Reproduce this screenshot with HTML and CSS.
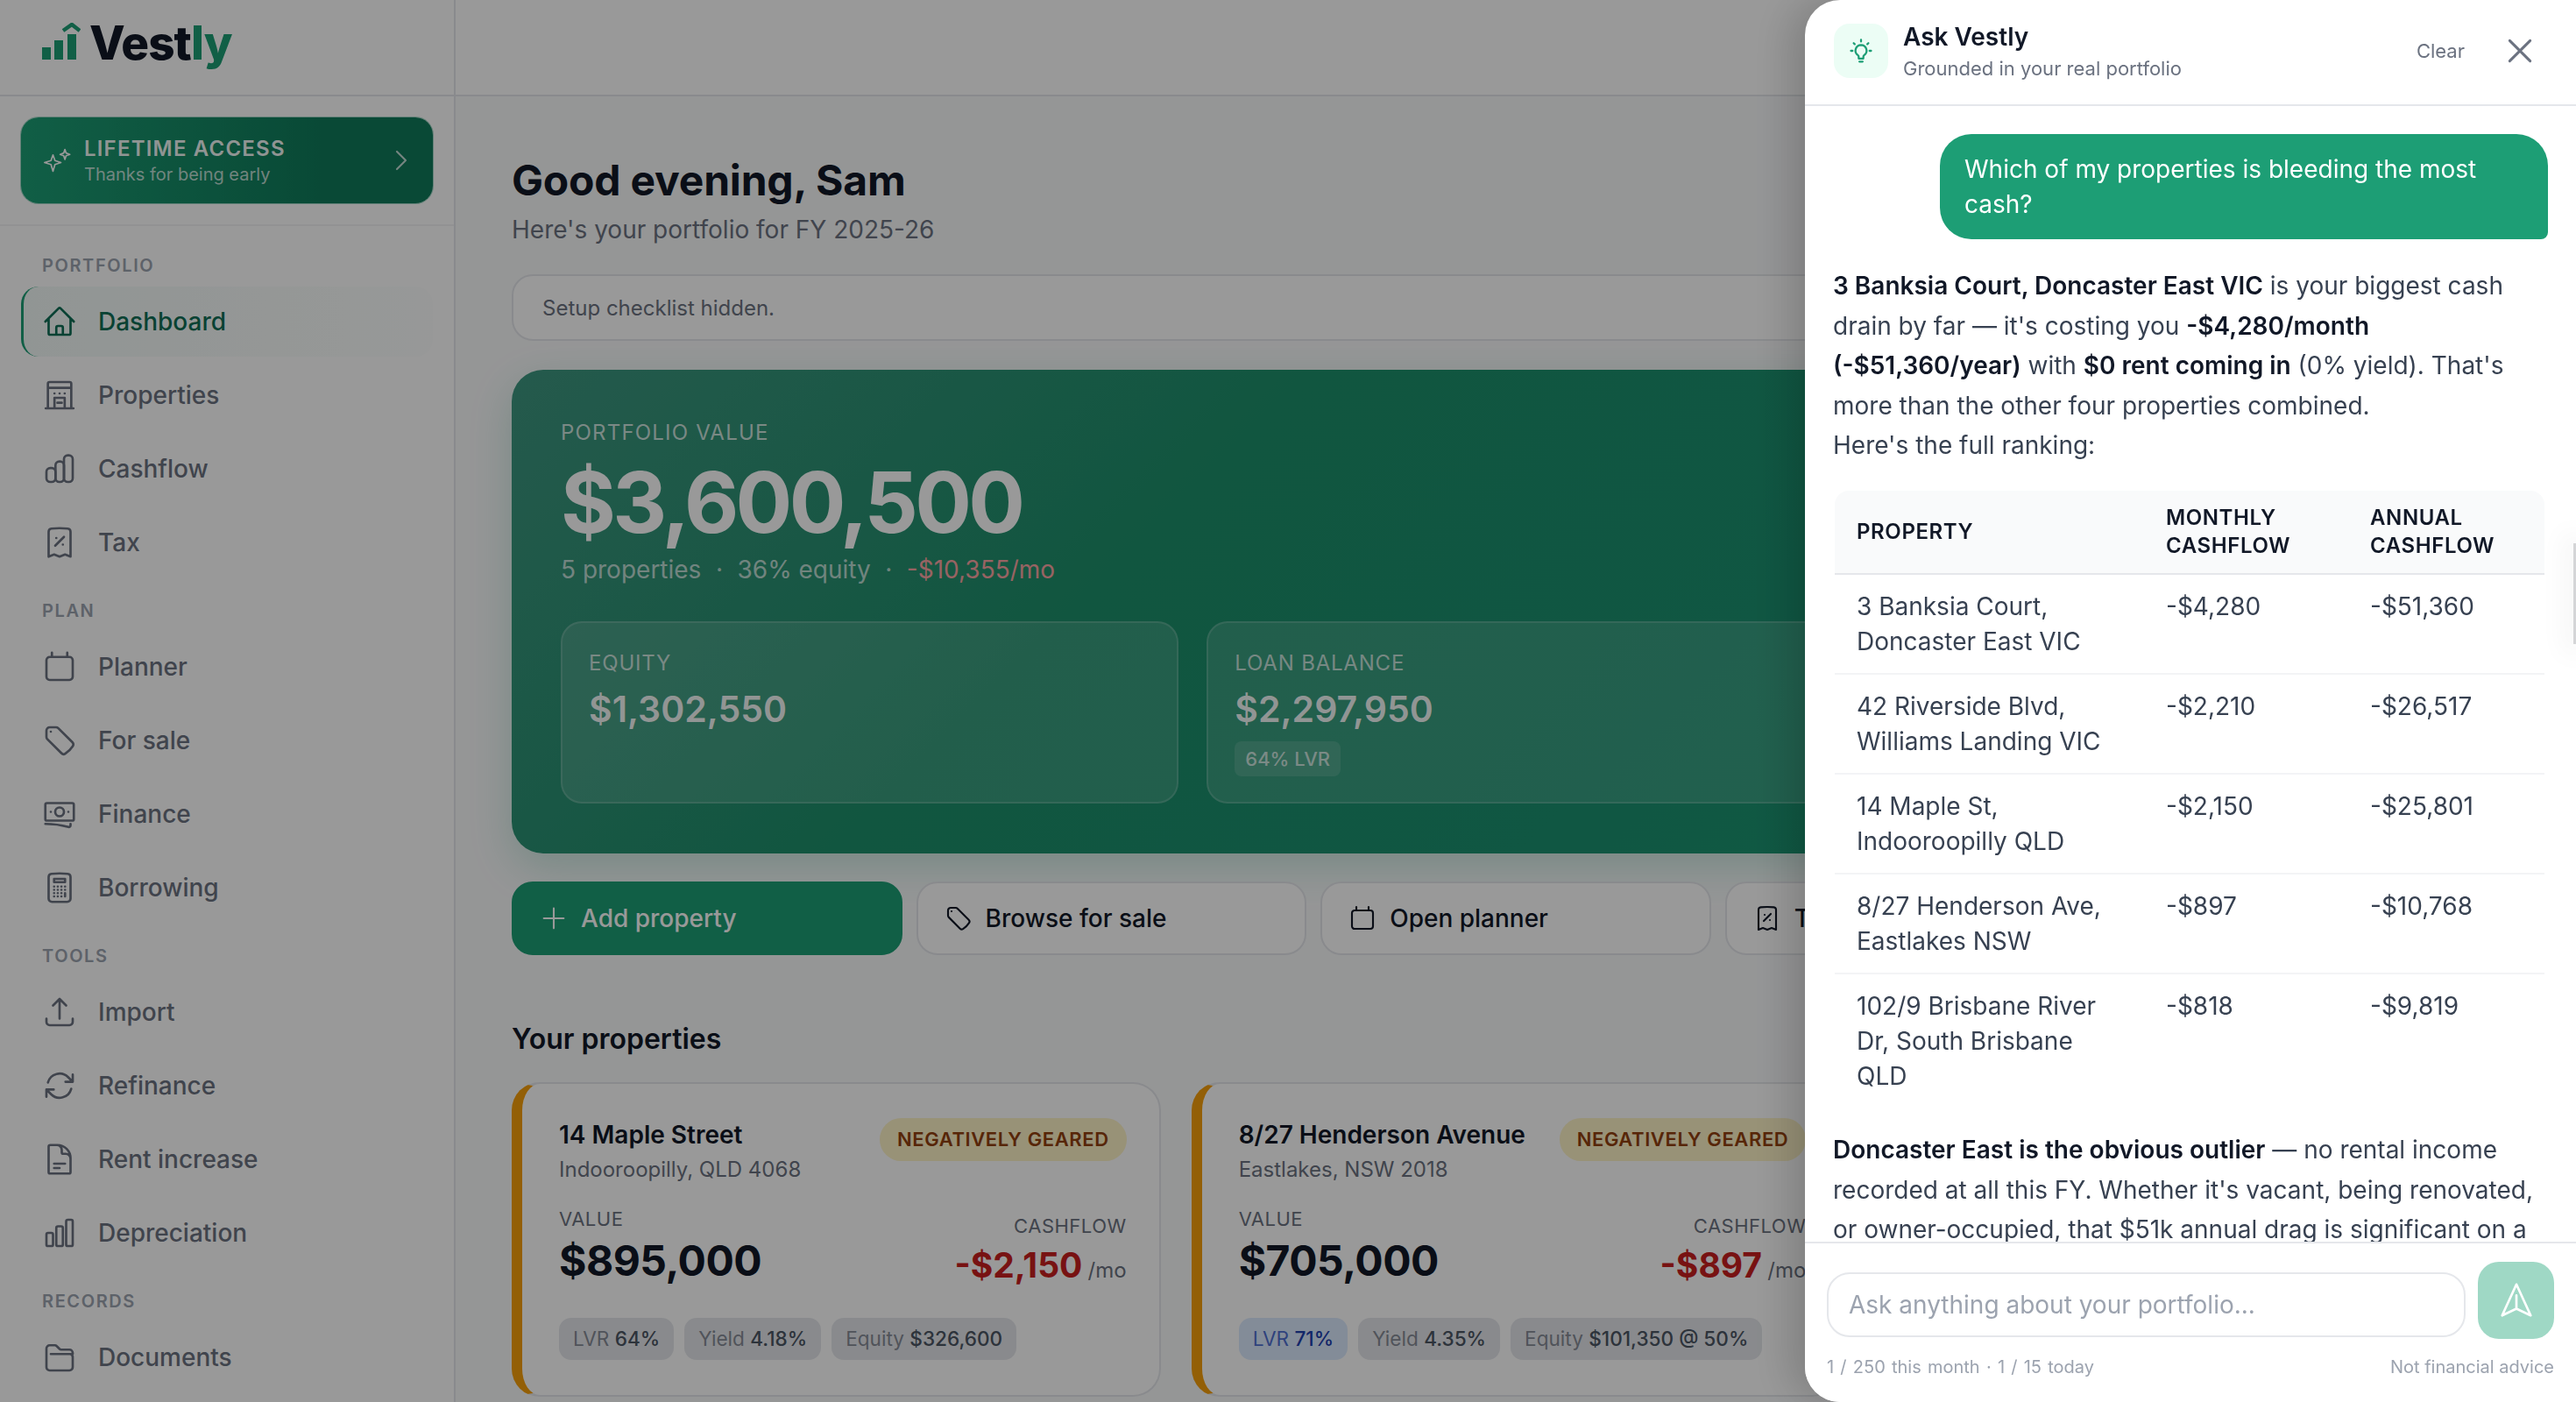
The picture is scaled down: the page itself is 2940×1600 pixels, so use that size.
FILE: index.html
```html
<!DOCTYPE html>
<html lang="en">
<head>
    <meta charset="UTF-8">
    <meta name="viewport" content="width=device-width, initial-scale=1.0">
    <title>Vestly</title>
    <link rel="stylesheet" href="styles.css">
</head>
<body>
    <!-- icon sprite -->
    <svg class="sprite" xmlns="http://www.w3.org/2000/svg">
        <symbol id="i-home" viewBox="0 0 24 24"><path d="m2.25 12 8.954-8.955c.44-.439 1.152-.439 1.591 0L21.75 12M4.5 9.75v10.125c0 .621.504 1.125 1.125 1.125H9.75v-4.875c0-.621.504-1.125 1.125-1.125h2.25c.621 0 1.125.504 1.125 1.125V21h4.125c.621 0 1.125-.504 1.125-1.125V9.75M8.25 21h8.25"/></symbol>
        <symbol id="i-building" viewBox="0 0 24 24"><path d="M2.5 21h19M4 21V4.1C4 3.5 4.5 3 5.1 3h13.8c.6 0 1.1.5 1.1 1.1V21M4 7h16M8.5 10.8h.01M12 10.8h.01M15.5 10.8h.01M8.5 21v-7.2h7V21M10.5 17.2h3"/></symbol>
        <symbol id="i-bars-joined" viewBox="0 0 24 24"><rect x="3" y="11.5" width="6.2" height="9.5" rx="2.6"/><rect x="9.2" y="7" width="5.8" height="14" rx="2.6"/><rect x="15" y="2.75" width="6" height="18.25" rx="2.6"/></symbol>
        <symbol id="i-receipt" viewBox="0 0 24 24"><path d="m9 14.25 6-6m4.5-3.493V21.75l-3.75-1.5-3.75 1.5-3.75-1.5-3.75 1.5V4.757c0-1.108.806-2.057 1.907-2.185a48.507 48.507 0 0 1 11.186 0c1.1.128 1.907 1.077 1.907 2.185ZM9.75 9h.008v.008H9.75V9Zm4.5 4.5h.008v.008h-.008V13.5Z"/></symbol>
        <symbol id="i-calendar" viewBox="0 0 24 24"><path d="M6.75 2.25v3M17.25 2.25v3M3 18.75V7.5a2.25 2.25 0 0 1 2.25-2.25h13.5A2.25 2.25 0 0 1 21 7.5v11.25A2.25 2.25 0 0 1 18.75 21H5.25A2.25 2.25 0 0 1 3 18.75Z"/></symbol>
        <symbol id="i-tag" viewBox="0 0 24 24"><path d="M9.568 3H5.25A2.25 2.25 0 0 0 3 5.25v4.318c0 .597.237 1.17.659 1.591l9.581 9.581c.699.699 1.78.872 2.607.33a18.095 18.095 0 0 0 5.223-5.223c.542-.827.369-1.908-.33-2.607L11.16 3.66A2.25 2.25 0 0 0 9.568 3Z"/><path d="M6 6h.008v.008H6V6Z"/></symbol>
        <symbol id="i-banknotes" viewBox="0 0 24 24"><path d="M2.25 18.75a60.07 60.07 0 0 1 15.797 2.101c.727.198 1.453-.342 1.453-1.096V18.75M3.375 4.5h17.25c.621 0 1.125.504 1.125 1.125v9.75c0 .621-.504 1.125-1.125 1.125H3.375a1.125 1.125 0 0 1-1.125-1.125v-9.75c0-.621.504-1.125 1.125-1.125ZM15 10.5a3 3 0 1 1-6 0 3 3 0 0 1 6 0Zm3 0h.008v.008H18V10.5Zm-12 0h.008v.008H6V10.5Z"/></symbol>
        <symbol id="i-calculator" viewBox="0 0 24 24"><path d="M15.75 15.75V18m-7.5-6.75h.008v.008H8.25v-.008Zm0 2.25h.008v.008H8.25V13.5Zm0 2.25h.008v.008H8.25v-.008Zm0 2.25h.008v.008H8.25V18Zm2.498-6.75h.007v.008h-.007v-.008Zm0 2.25h.007v.008h-.007V13.5Zm0 2.25h.007v.008h-.007v-.008Zm0 2.25h.007v.008h-.007V18Zm2.504-6.75h.008v.008h-.008v-.008Zm0 2.25h.008v.008h-.008V13.5Zm0 2.25h.008v.008h-.008v-.008Zm0 2.25h.008v.008h-.008V18Zm2.498-6.75h.008v.008h-.008v-.008Zm0 2.25h.008v.008h-.008V13.5ZM8.25 6h7.5v2.25h-7.5V6ZM12 2.25c-1.892 0-3.758.11-5.593.322C5.307 2.7 4.5 3.65 4.5 4.757V19.5a2.25 2.25 0 0 0 2.25 2.25h10.5a2.25 2.25 0 0 0 2.25-2.25V4.757c0-1.108-.806-2.057-1.907-2.185A48.507 48.507 0 0 0 12 2.25Z"/></symbol>
        <symbol id="i-upload" viewBox="0 0 24 24"><path d="M3 16.5v2.25A2.25 2.25 0 0 0 5.25 21h13.5A2.25 2.25 0 0 0 21 18.75V16.5m-13.5-9L12 3m0 0 4.5 4.5M12 3v13.5"/></symbol>
        <symbol id="i-refresh" viewBox="0 0 24 24"><path d="M16.023 9.348h4.992v-.001M2.985 19.644v-4.992m0 0h4.992m-4.993 0 3.181 3.183a8.25 8.25 0 0 0 13.803-3.7M4.031 9.865a8.25 8.25 0 0 1 13.803-3.7l3.181 3.182m0-4.991v4.99"/></symbol>
        <symbol id="i-document" viewBox="0 0 24 24"><path d="M19.5 14.25v-2.625a3.375 3.375 0 0 0-3.375-3.375h-1.5A1.125 1.125 0 0 1 13.5 7.125v-1.5a3.375 3.375 0 0 0-3.375-3.375H8.25m0 12.75h7.5m-7.5 3H12M10.5 2.25H5.625c-.621 0-1.125.504-1.125 1.125v17.25c0 .621.504 1.125 1.125 1.125h12.75c.621 0 1.125-.504 1.125-1.125V11.25a9 9 0 0 0-9-9Z"/></symbol>
        <symbol id="i-bars" viewBox="0 0 24 24"><path d="M3 13.125C3 12.504 3.504 12 4.125 12h2.25c.621 0 1.125.504 1.125 1.125v6.75C7.5 20.496 6.996 21 6.375 21h-2.25A1.125 1.125 0 0 1 3 19.875v-6.75ZM9.75 8.625c0-.621.504-1.125 1.125-1.125h2.25c.621 0 1.125.504 1.125 1.125v11.25c0 .621-.504 1.125-1.125 1.125h-2.25a1.125 1.125 0 0 1-1.125-1.125V8.625ZM16.5 4.125c0-.621.504-1.125 1.125-1.125h2.25C20.496 3 21 3.504 21 4.125v15.75c0 .621-.504 1.125-1.125 1.125h-2.25a1.125 1.125 0 0 1-1.125-1.125V4.125Z"/></symbol>
        <symbol id="i-folder" viewBox="0 0 24 24"><path d="M3 17.5V6a2.25 2.25 0 0 1 2.25-2.25h3.6c.4 0 .8.16 1.06.44l2.1 2.12c.28.28.66.44 1.06.44h5.68A2.25 2.25 0 0 1 21 9v.75M6 9.75h13.5A2.25 2.25 0 0 1 21 12v6.75A2.25 2.25 0 0 1 18.75 21H5.25A2.25 2.25 0 0 1 3 18.75V12"/></symbol>
        <symbol id="i-sparkles" viewBox="0 0 30 26"><path d="M11 7.5 13 13.2 19 15.2 13 17.2 11 24 9 17.2 2.5 15.2 9 13.2ZM23 2l1.2 3.6L28 7 24.2 8.4 23 12 21.8 8.4 18.2 7 21.8 5.6Z"/></symbol>
        <symbol id="i-chevron" viewBox="0 0 24 24"><path d="m8.25 4.5 7.5 7.5-7.5 7.5"/></symbol>
        <symbol id="i-plus" viewBox="0 0 24 24"><path d="M12 3.5v17m8.5-8.5h-17"/></symbol>
        <symbol id="i-close" viewBox="0 0 24 24"><path d="M5 5l14 14M19 5 5 19"/></symbol>
        <symbol id="i-bulb" viewBox="0 0 24 24"><path d="M12 7a4.8 4.8 0 0 0-2.6 8.8c.4.3.6.7.6 1.2v1.6h4V17c0-.5.2-.9.6-1.2A4.8 4.8 0 0 0 12 7ZM10.6 21.2h2.8M12 2.5v1.6M4.7 12H3.4M20.6 12h-1.3M6.6 6.3l-.9-.9M17.4 6.3l.9-.9"/></symbol>
        <symbol id="i-send" viewBox="0 0 24 24"><path d="M12 2.5 20.5 21 12 17 3.5 21 12 2.5ZM12 17V9"/></symbol>
    </svg>

    <div class="app">
        <aside class="sidebar">
            <div class="brand">
                <svg class="brand-mark" viewBox="0 0 44 44">
                    <rect x="0" y="28" width="10" height="14"/>
                    <rect x="14" y="20" width="10" height="22"/>
                    <rect x="29" y="13" width="10" height="29"/>
                    <path class="brand-arrow" d="M24 9 34 2 43 9"/>
                </svg>
                <span class="brand-name">Vest<span>ly</span></span>
            </div>
            <div class="lifetime-wrap">
                <div class="lifetime">
                    <svg class="icon lifetime-star"><use href="#i-sparkles"/></svg>
                    <div class="lifetime-text">
                        <div class="lifetime-title">LIFETIME ACCESS</div>
                        <div class="lifetime-sub">Thanks for being early</div>
                    </div>
                    <svg class="icon lifetime-arrow"><use href="#i-chevron"/></svg>
                </div>
            </div>
            <nav class="nav">
                <div class="nav-label">PORTFOLIO</div>
                <a class="nav-item active"><svg class="icon"><use href="#i-home"/></svg>Dashboard</a>
                <a class="nav-item"><svg class="icon"><use href="#i-building"/></svg>Properties</a>
                <a class="nav-item"><svg class="icon"><use href="#i-bars-joined"/></svg>Cashflow</a>
                <a class="nav-item"><svg class="icon"><use href="#i-receipt"/></svg>Tax</a>

                <div class="nav-label">PLAN</div>
                <a class="nav-item"><svg class="icon"><use href="#i-calendar"/></svg>Planner</a>
                <a class="nav-item"><svg class="icon"><use href="#i-tag"/></svg>For sale</a>
                <a class="nav-item"><svg class="icon"><use href="#i-banknotes"/></svg>Finance</a>
                <a class="nav-item"><svg class="icon"><use href="#i-calculator"/></svg>Borrowing</a>

                <div class="nav-label">TOOLS</div>
                <a class="nav-item"><svg class="icon"><use href="#i-upload"/></svg>Import</a>
                <a class="nav-item"><svg class="icon"><use href="#i-refresh"/></svg>Refinance</a>
                <a class="nav-item"><svg class="icon"><use href="#i-document"/></svg>Rent increase</a>
                <a class="nav-item"><svg class="icon"><use href="#i-bars"/></svg>Depreciation</a>

                <div class="nav-label">RECORDS</div>
                <a class="nav-item"><svg class="icon"><use href="#i-folder"/></svg>Documents</a>
            </nav>
        </aside>

        <main class="main">
            <div class="topbar"></div>
            <div class="content">
                <h1 class="greeting">Good evening, Sam</h1>
                <p class="greeting-sub">Here's your portfolio for FY 2025-26</p>
                <div class="setup-note">Setup checklist hidden.</div>

                <section class="hero">
                    <div class="hero-label">PORTFOLIO VALUE</div>
                    <div class="hero-value">$3,600,500</div>
                    <div class="hero-meta">5 properties<i>·</i>36% equity<i>·</i><span>-$10,355/mo</span></div>
                    <div class="hero-stats">
                        <div class="stat">
                            <div class="stat-label">EQUITY</div>
                            <div class="stat-value">$1,302,550</div>
                        </div>
                        <div class="stat">
                            <div class="stat-label">LOAN BALANCE</div>
                            <div class="stat-value">$2,297,950</div>
                            <span class="stat-chip">64% LVR</span>
                        </div>
                        <div class="stat">
                            <div class="stat-label">CASHFLOW</div>
                            <div class="stat-value">-$10,355</div>
                        </div>
                    </div>
                </section>

                <div class="actions">
                    <button class="action primary"><svg class="icon"><use href="#i-plus"/></svg>Add property</button>
                    <button class="action"><svg class="icon"><use href="#i-tag"/></svg>Browse for sale</button>
                    <button class="action"><svg class="icon"><use href="#i-calendar"/></svg>Open planner</button>
                    <button class="action"><svg class="icon"><use href="#i-receipt"/></svg>Tax summary</button>
                    <button class="action"><svg class="icon"><use href="#i-document"/></svg>Reports</button>
                </div>

                <h2 class="section-title">Your properties</h2>
                <div class="cards">
                    <article class="card">
                        <div class="card-head">
                            <div>
                                <div class="card-title">14 Maple Street</div>
                                <div class="card-sub">Indooroopilly, QLD 4068</div>
                            </div>
                            <span class="badge">NEGATIVELY GEARED</span>
                        </div>
                        <div class="card-figures">
                            <div>
                                <div class="figure-label">VALUE</div>
                                <div class="figure-value">$895,000</div>
                            </div>
                            <div class="figure-right">
                                <div class="figure-label">CASHFLOW</div>
                                <div class="figure-cash">-$2,150 <span>/mo</span></div>
                            </div>
                        </div>
                        <div class="chips">
                            <span class="chip">LVR <b>64%</b></span>
                            <span class="chip">Yield <b>4.18%</b></span>
                            <span class="chip">Equity <b>$326,600</b></span>
                        </div>
                    </article>
                    <article class="card">
                        <div class="card-head">
                            <div>
                                <div class="card-title">8/27 Henderson Avenue</div>
                                <div class="card-sub">Eastlakes, NSW 2018</div>
                            </div>
                            <span class="badge">NEGATIVELY GEARED</span>
                        </div>
                        <div class="card-figures">
                            <div>
                                <div class="figure-label">VALUE</div>
                                <div class="figure-value">$705,000</div>
                            </div>
                            <div class="figure-right">
                                <div class="figure-label">CASHFLOW</div>
                                <div class="figure-cash">-$897 <span>/mo</span></div>
                            </div>
                        </div>
                        <div class="chips">
                            <span class="chip blue">LVR <b>71%</b></span>
                            <span class="chip">Yield <b>4.35%</b></span>
                            <span class="chip">Equity <b>$101,350 @ 50%</b></span>
                        </div>
                    </article>
                </div>
            </div>
        </main>
    </div>

    <div class="backdrop"></div>

    <aside class="chat">
        <header class="chat-head">
            <div class="chat-logo"><svg class="icon"><use href="#i-bulb"/></svg></div>
            <div class="chat-heading">
                <div class="chat-title">Ask Vestly</div>
                <div class="chat-sub">Grounded in your real portfolio</div>
            </div>
            <button class="chat-clear">Clear</button>
            <svg class="icon chat-close"><use href="#i-close"/></svg>
        </header>

        <div class="chat-body">
            <div class="bubble">Which of my properties is bleeding the most cash?</div>
            <p class="answer"><strong>3 Banksia Court, Doncaster East VIC</strong> is your biggest cash drain by far — it's costing you <strong>-$4,280/month (-$51,360/year)</strong> with <strong>$0 rent coming in</strong> (0% yield). That's more than the other four properties combined.<br>Here's the full ranking:</p>
            <table class="rank">
                <thead>
                    <tr><th>PROPERTY</th><th>MONTHLY CASHFLOW</th><th>ANNUAL CASHFLOW</th></tr>
                </thead>
                <tbody>
                    <tr><td>3 Banksia Court, Doncaster East VIC</td><td>-$4,280</td><td>-$51,360</td></tr>
                    <tr><td>42 Riverside Blvd, Williams Landing VIC</td><td>-$2,210</td><td>-$26,517</td></tr>
                    <tr><td>14 Maple St, Indooroopilly QLD</td><td>-$2,150</td><td>-$25,801</td></tr>
                    <tr><td>8/27 Henderson Ave, Eastlakes NSW</td><td>-$897</td><td>-$10,768</td></tr>
                    <tr><td>102/9 Brisbane River Dr, South Brisbane QLD</td><td>-$818</td><td>-$9,819</td></tr>
                </tbody>
            </table>
            <p class="answer"><strong>Doncaster East is the obvious outlier</strong> — no rental income recorded at all this FY. Whether it's vacant, being renovated, or owner-occupied, that $51k annual drag is significant on a</p>
        </div>
        <div class="chat-thumb"></div>

        <footer class="chat-foot">
            <div class="composer">
                <input class="composer-input" type="text" placeholder="Ask anything about your portfolio...">
                <button class="composer-send"><svg class="icon"><use href="#i-send"/></svg></button>
            </div>
            <div class="composer-note">
                <span class="composer-usage">1 / 250 this month · 1 / 15 today</span>
                <span>Not financial advice</span>
            </div>
        </footer>
    </aside>
</body>
</html>
```

FILE: styles.css
```css
* {
    margin: 0;
    padding: 0;
    box-sizing: border-box;
}

html, body {
    height: 100%;
    overflow: hidden;
}

body {
    font-family: 'Inter', 'Liberation Sans', sans-serif;
    background: #f9fafb;
    color: #111827;
}

.sprite {
    display: none;
}

.icon {
    width: 40px;
    height: 40px;
    flex: none;
    fill: none;
    stroke: currentColor;
    stroke-width: 1.6;
    stroke-linecap: round;
    stroke-linejoin: round;
}

.app {
    display: flex;
    height: 100vh;
}

/* Sidebar */
.sidebar {
    width: 520px;
    flex: none;
    background: #fff;
    border-right: 2px solid #e5e7eb;
    overflow: hidden;
}

.brand {
    height: 110px;
    padding: 0 48px 10px;
    display: flex;
    align-items: center;
    gap: 10px;
    border-bottom: 2px solid #e5e7eb;
}

.brand-mark {
    width: 44px;
    height: 44px;
    margin-top: -3px;
    fill: #1d9e75;
}

.brand-arrow {
    fill: none;
    stroke: #1d9e75;
    stroke-width: 4.5;
}

.brand-name {
    font-size: 53px;
    font-weight: 800;
    letter-spacing: -1px;
    color: #111827;
    line-height: 1;
}

.brand-name span {
    color: #1d9e75;
}

.lifetime-wrap {
    padding: 24px;
    border-bottom: 2px solid #f3f4f6;
}

.lifetime {
    height: 98px;
    padding: 0 20px 0 24px;
    display: flex;
    align-items: center;
    gap: 14px;
    border-radius: 20px;
    color: #fff;
    background: linear-gradient(90deg, #1d9e75, #0f7a5a 75%, #0f7a5a);
    box-shadow: 0 0 0 1px rgba(29, 158, 117, .4);
}

.lifetime-star {
    width: 34px;
    height: 30px;
    stroke-width: 1.5;
    color: #fff;
}

.lifetime-text {
    flex: 1;
}

.lifetime-title {
    font-size: 24px;
    font-weight: 600;
    letter-spacing: 1.2px;
    line-height: 32px;
    color: rgba(255, 255, 255, .95);
}

.lifetime-sub {
    font-size: 20px;
    line-height: 26px;
    color: rgba(255, 255, 255, .72);
}

.lifetime-arrow {
    width: 32px;
    height: 32px;
    color: rgba(255, 255, 255, .75);
}

.nav {
    padding: 31px 24px 0;
}

.nav-label {
    padding-left: 24px;
    margin: 24px 0 10px;
    font-size: 20px;
    font-weight: 600;
    line-height: 28px;
    letter-spacing: 1.6px;
    color: #9ca3af;
}

.nav-label:first-child {
    margin-top: 0;
}

.nav-item {
    height: 80px;
    margin-bottom: 4px;
    padding-left: 24px;
    display: flex;
    align-items: center;
    gap: 24px;
    border-radius: 20px;
    font-size: 28px;
    font-weight: 500;
    color: #6b7280;
}

.nav-item:nth-last-child(1),
.nav-item:has(+ .nav-label) {
    margin-bottom: 0;
}

.nav-item.active {
    color: #0f6e56;
    border-left: 3px solid #1d9e75;
    padding-left: 21px;
    background: linear-gradient(90deg, rgba(29, 158, 117, .06), rgba(29, 158, 117, .01));
}

/* Main column */
.main {
    flex: 1;
    min-width: 0;
    overflow: hidden;
}

.topbar {
    height: 110px;
    background: #fff;
    border-bottom: 2px solid #e5e7eb;
}

.content {
    padding: 66px 64px 0;
}

.greeting {
    font-size: 48px;
    font-weight: 700;
    line-height: 60px;
    letter-spacing: -.2px;
    color: #111827;
}

.greeting-sub {
    margin-top: 6px;
    font-size: 28px;
    line-height: 40px;
    color: #6b7280;
}

.setup-note {
    height: 76px;
    margin-top: 31px;
    padding: 0 33px;
    display: flex;
    align-items: center;
    background: #fff;
    border: 2px solid #e5e7eb;
    border-radius: 24px;
    font-size: 24px;
    color: #6b7280;
}

.hero {
    height: 552px;
    margin-top: 33px;
    padding: 56px 56px;
    border-radius: 36px;
    color: #fff;
    background: linear-gradient(135deg, #3e9680 0%, #1d8f6b 32%, #1b9170 60%, #1d9e75 100%);
    box-shadow: 0 16px 48px rgba(29, 158, 117, .22);
}

.hero-label {
    font-size: 24px;
    line-height: 32px;
    letter-spacing: 1.2px;
    color: rgba(255, 255, 255, .75);
}

.hero-value {
    margin-top: 8px;
    font-size: 96px;
    font-weight: 700;
    line-height: 110px;
    letter-spacing: -3.7px;
}

.hero-meta {
    margin-top: 2px;
    font-size: 28px;
    line-height: 40px;
    color: rgba(255, 255, 255, .7);
}

.hero-meta i {
    font-style: normal;
    margin: 0 16.5px;
}

.hero-meta span {
    color: #fca5a5;
}

.hero-stats {
    margin-top: 39px;
    display: grid;
    grid-template-columns: repeat(3, 1fr);
    gap: 32px;
}

.stat {
    height: 208px;
    padding: 30px 30px;
    background: rgba(255, 255, 255, .13);
    border: 2px solid rgba(255, 255, 255, .16);
    border-radius: 24px;
}

.stat-label {
    font-size: 24px;
    line-height: 32px;
    letter-spacing: .8px;
    color: rgba(255, 255, 255, .72);
}

.stat-value {
    margin-top: 8px;
    font-size: 41px;
    font-weight: 600;
    line-height: 56px;
    color: rgba(255, 255, 255, .95);
}

.stat-chip {
    display: inline-block;
    margin-top: 9px;
    padding: 0 12px;
    height: 40px;
    background: rgba(255, 255, 255, .13);
    border-radius: 8px;
    font-size: 22px;
    font-weight: 500;
    line-height: 40px;
    color: rgba(255, 255, 255, .72);
}

.actions {
    margin-top: 32px;
    display: grid;
    grid-template-columns: repeat(5, 1fr);
    gap: 16px;
}

.action {
    height: 84px;
    padding: 0 30px;
    display: flex;
    align-items: center;
    gap: 15px;
    background: #fff;
    border: 2px solid #e5e7eb;
    border-radius: 24px;
    font-family: inherit;
    font-size: 28px;
    font-weight: 500;
    color: #111827;
}

.action .icon {
    width: 32px;
    height: 32px;
}

.action.primary {
    background: #1d9e75;
    border-color: #1d9e75;
    color: #fff;
}

.section-title {
    margin-top: 74px;
    font-size: 32px;
    font-weight: 600;
    line-height: 44px;
    color: #111827;
}

.cards {
    margin-top: 27px;
    display: grid;
    grid-template-columns: repeat(3, 1fr);
    gap: 35px;
}

.card {
    height: 359px;
    padding: 38px 37px 0 42px;
    background: #fff;
    border: 2px solid #e5e7eb;
    border-left: 12px solid #f59e0b;
    border-radius: 32px;
}

.card-head {
    display: flex;
    justify-content: space-between;
    align-items: flex-start;
}

.card-title {
    font-size: 28px;
    font-weight: 600;
    line-height: 40px;
    color: #111827;
}

.card-sub {
    margin-top: 2px;
    font-size: 24px;
    line-height: 36px;
    color: #6b7280;
}

.badge {
    height: 49px;
    margin-top: 1px;
    padding: 0 20px;
    background: #fef3c7;
    border-radius: 25px;
    font-size: 22px;
    font-weight: 600;
    line-height: 49px;
    letter-spacing: .6px;
    white-space: nowrap;
    color: #92400e;
}

.card-figures {
    margin-top: 22px;
    display: flex;
    justify-content: space-between;
    align-items: flex-end;
}

.figure-right {
    margin-bottom: -4px;
    text-align: right;
}

.figure-right .figure-label {
    margin-bottom: 4px;
}

.figure-label {
    font-size: 22px;
    line-height: 32px;
    letter-spacing: .5px;
    color: #6b7280;
}

.figure-value {
    font-size: 48px;
    font-weight: 700;
    line-height: 64px;
    letter-spacing: -.5px;
    color: #111827;
}

.figure-cash {
    font-size: 39px;
    font-weight: 700;
    line-height: 50px;
    color: #c81e1e;
}

.figure-cash span {
    margin-left: -3px;
    font-size: 24px;
    font-weight: 400;
    color: #6b7280;
}

.chips {
    margin-top: 33px;
    display: flex;
    gap: 12px;
}

.chip {
    height: 48px;
    padding: 0 16px;
    background: #e5e7eb;
    border-radius: 14px;
    font-size: 22.6px;
    line-height: 48px;
    color: #858b96;
}

.chip b {
    font-weight: 500;
    color: #4b5563;
}

.chip.blue {
    background: #dbeafe;
    color: #4f6fd0;
}

.chip.blue b {
    color: #1e40af;
}

/* Dim layer over the app */
.backdrop {
    position: fixed;
    inset: 0;
    background: rgba(0, 0, 0, .4);
}

/* Chat drawer */
.chat {
    position: fixed;
    top: 0;
    right: 0;
    bottom: 0;
    width: 880px;
    display: flex;
    flex-direction: column;
    background: #fff;
    border-radius: 40px 0 0 40px;
    box-shadow: -16px 0 48px rgba(0, 0, 0, .18);
    overflow: hidden;
}

.chat-head {
    flex: none;
    height: 121px;
    padding: 0 44px 3px 33px;
    display: flex;
    align-items: center;
    gap: 17px;
    border-bottom: 2px solid #e5e7eb;
}

.chat-logo {
    width: 62px;
    height: 62px;
    display: flex;
    align-items: center;
    justify-content: center;
    background: #ecfdf5;
    border-radius: 18px;
    color: #1d9e75;
}

.chat-logo .icon {
    width: 32px;
    height: 32px;
    stroke-width: 1.7;
}

.chat-heading {
    flex: 1;
}

.chat-title {
    font-size: 28px;
    font-weight: 600;
    line-height: 38px;
    color: #111827;
}

.chat-sub {
    margin-top: 2px;
    font-size: 22px;
    line-height: 30px;
    color: #6b7280;
}

.chat-clear {
    margin-right: 26px;
    background: none;
    border: none;
    font-family: inherit;
    font-size: 22px;
    color: #6b7280;
}

.chat-close {
    color: #6b7280;
    stroke-width: 1.8;
}

.chat-body {
    flex: 1;
    min-height: 0;
    padding: 32px 32px 0;
    overflow: hidden;
}

.chat-thumb {
    position: absolute;
    top: 620px;
    right: 0;
    width: 3px;
    height: 115px;
    background: #d4d5d7;
    box-shadow: 0 0 30px 12px rgba(0, 0, 0, .04);
}

.bubble {
    width: 694px;
    margin-left: auto;
    padding: 20px 28px;
    background: #1d9e75;
    border-radius: 36px 36px 8px 36px;
    font-size: 28px;
    line-height: 40px;
    color: #fff;
}

.answer {
    margin-top: 31px;
    font-size: 28px;
    line-height: 45.6px;
    color: #374151;
}

.answer strong {
    font-weight: 600;
    color: #111827;
}

.rank {
    width: 810px;
    margin: 28px 0 0 2px;
    border-collapse: collapse;
    table-layout: fixed;
}

.rank th {
    padding: 15px 25px;
    background: #f9fafb;
    border-bottom: 2px solid #e5e7eb;
    font-size: 24px;
    font-weight: 600;
    line-height: 32px;
    letter-spacing: .6px;
    text-align: left;
    color: #111827;
}

.rank th:first-child {
    width: 353px;
    border-top-left-radius: 16px;
}

.rank th:nth-child(2) {
    width: 233px;
}

.rank th:last-child {
    border-top-right-radius: 16px;
}

.rank td {
    padding: 16px 25px;
    border-bottom: 2px solid #f3f4f6;
    font-size: 28px;
    line-height: 40px;
    vertical-align: top;
    color: #374151;
}

.rank tr:last-child td {
    border-bottom: none;
}

.rank + .answer {
    margin-top: 26px;
}

.chat-foot {
    flex: none;
    height: 183px;
    padding: 21px 25px 0;
    background: #fff;
    border-top: 2px solid #e5e7eb;
}

.composer {
    display: flex;
    align-items: flex-end;
    gap: 14px;
}

.composer-input {
    flex: 1;
    min-width: 0;
    height: 74px;
    margin-bottom: 2px;
    padding: 0 23px;
    border: 2px solid #e5e7eb;
    border-radius: 26px;
    outline: none;
    font-family: inherit;
    font-size: 28px;
}

.composer-input::placeholder {
    color: #9ca3af;
}

.composer-send {
    width: 87px;
    height: 88px;
    flex: none;
    display: flex;
    align-items: center;
    justify-content: center;
    background: #9fd8c5;
    border: none;
    border-radius: 24px;
    color: #fff;
}

.composer-send .icon {
    width: 46px;
    height: 46px;
    stroke-width: 1.4;
}

.composer-note {
    margin-top: 17px;
    display: flex;
    justify-content: space-between;
    font-size: 20px;
    line-height: 30px;
    color: #9ca3af;
}

.composer-usage {
    word-spacing: 1.6px;
}
```
